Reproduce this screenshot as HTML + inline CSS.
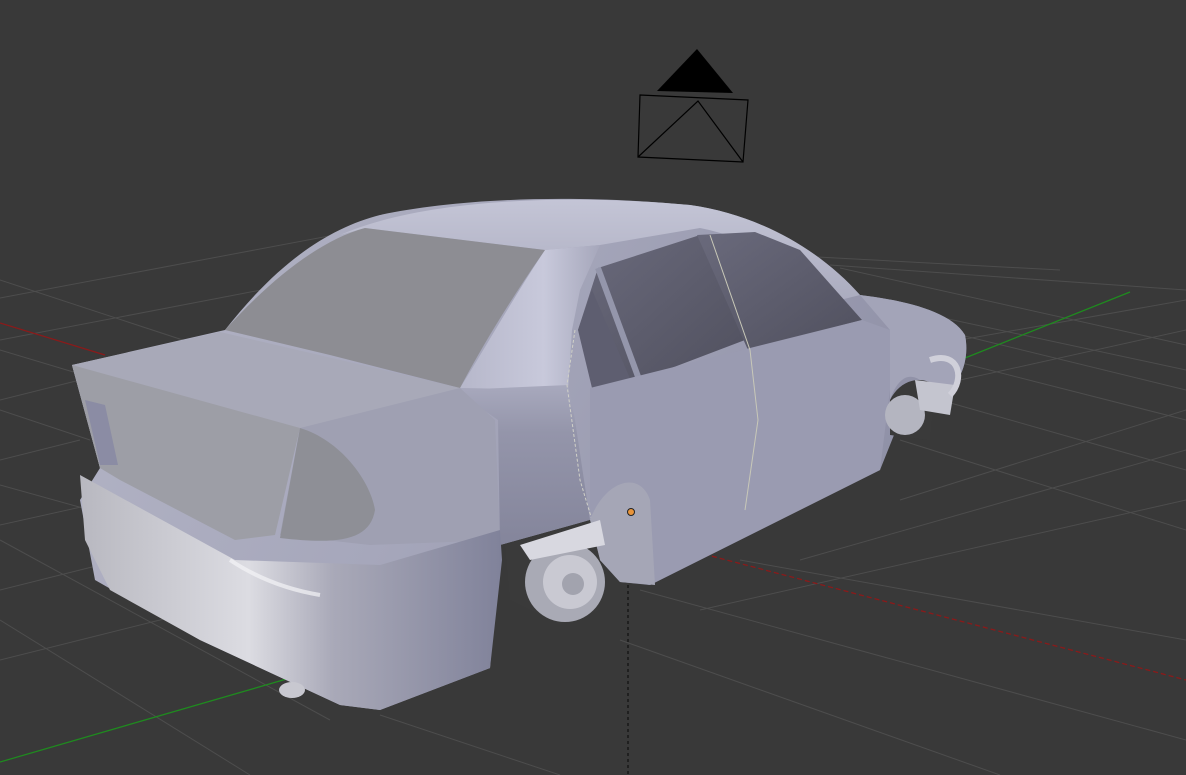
<!DOCTYPE html>
<html><head><meta charset="utf-8"><style>
html,body{margin:0;padding:0;background:#393939;overflow:hidden}
svg{display:block}
</style></head><body>
<svg width="1186" height="775" viewBox="0 0 1186 775" xmlns="http://www.w3.org/2000/svg">
<defs>
<linearGradient id="body" x1="0" y1="0" x2="1" y2="0.3">
<stop offset="0" stop-color="#b4b5c6"/><stop offset="0.5" stop-color="#a6a7bb"/><stop offset="1" stop-color="#8f90a6"/></linearGradient>
<linearGradient id="roof" x1="0" y1="0" x2="0" y2="1">
<stop offset="0" stop-color="#c4c5d6"/><stop offset="1" stop-color="#abacbf"/></linearGradient>
<linearGradient id="win" x1="0" y1="0" x2="1" y2="1">
<stop offset="0" stop-color="#6a6a7c"/><stop offset="1" stop-color="#50505e"/></linearGradient>
<linearGradient id="bump" x1="0" y1="0" x2="1" y2="0">
<stop offset="0" stop-color="#b8b8c0"/><stop offset="0.4" stop-color="#dcdce2"/><stop offset="0.6" stop-color="#a9a9b8"/><stop offset="1" stop-color="#80829a"/></linearGradient>
<linearGradient id="pillar" x1="0" y1="0" x2="1" y2="0">
<stop offset="0" stop-color="#b6b7ca"/><stop offset="0.6" stop-color="#c8c9db"/><stop offset="1" stop-color="#a6a7bb"/></linearGradient>
<linearGradient id="quarter" x1="0" y1="0" x2="0" y2="1">
<stop offset="0" stop-color="#a8a9bd"/><stop offset="0.3" stop-color="#9495aa"/><stop offset="1" stop-color="#84859b"/></linearGradient>
</defs>
<rect width="1186" height="775" fill="#393939"/>
<g stroke="#4d4d4d" stroke-width="1" fill="none">
<path d="M0 298 L520 200"/><path d="M0 340 L470 250"/><path d="M0 400 L80 380"/><path d="M0 460 L80 440"/><path d="M0 525 L90 505"/><path d="M0 590 L120 560"/><path d="M0 660 L200 610"/>
<path d="M0 280 L320 385"/><path d="M0 350 L100 380"/><path d="M0 410 L90 440"/><path d="M0 485 L90 510"/>
<path d="M0 540 L330 720"/><path d="M0 620 L250 775"/><path d="M380 715 L560 775"/>
<path d="M840 268 L1186 345"/><path d="M860 300 L1186 370"/><path d="M940 330 L1186 390"/><path d="M950 360 L1186 420"/><path d="M940 400 L1186 470"/><path d="M900 440 L1186 530"/>
<path d="M830 265 L1186 290"/><path d="M960 340 L1186 300"/><path d="M960 380 L1186 330"/><path d="M900 500 L1186 410"/><path d="M800 560 L1186 450"/><path d="M700 610 L1186 500"/>
<path d="M640 590 L1186 740"/><path d="M620 640 L1000 775"/><path d="M740 560 L1186 640"/>
<path d="M780 255 L1060 270"/>
</g>
<path d="M0 323 L105 355" stroke="#8a1a1a" stroke-width="1.3"/>
<path d="M650 540 L1186 680" stroke="#8a1a1a" stroke-width="1.3" stroke-dasharray="5 3"/>
<path d="M0 762 L290 678" stroke="#1f8a1f" stroke-width="1.3"/>
<path d="M960 360 L1130 292" stroke="#1f8a1f" stroke-width="1.3"/>
<path d="M628 585 L628 775" stroke="#111" stroke-width="1.2" stroke-dasharray="3 3"/>
<!-- camera -->
<polygon points="657,91 697,49 733,93" fill="#000"/>
<polygon points="640,95 748,100 743,162 638,157" fill="none" stroke="#000" stroke-width="1.2"/>
<polyline points="638,157 698,101 743,162" fill="none" stroke="#000" stroke-width="1.2"/>
<!-- main body silhouette -->
<path d="M225 330 C280 260 330 228 380 215 C450 200 560 193 690 205 C760 215 820 250 860 295 C900 300 950 310 965 335 C970 360 960 380 950 390 L900 420 L880 470 L650 585 L620 582 L600 560 L590 520 L500 545 L490 668 L380 710 L340 705 L200 640 L95 580 L80 500 L100 468 L72 365 Z" fill="url(#body)"/>
<!-- roof -->
<path d="M340 235 C420 200 560 193 690 205 C760 215 820 250 860 295 L840 300 C800 270 760 240 700 228 L600 245 L545 250 L365 228 Z" fill="url(#roof)"/>
<!-- C pillar -->
<path d="M545 250 L600 245 L580 290 L572 330 L568 390 L460 388 C490 340 515 295 545 250 Z" fill="url(#pillar)"/>
<!-- rear window -->
<path d="M225 330 C270 280 320 240 365 228 L545 250 C510 300 480 350 460 388 L330 355 Z" fill="#8d8d93"/>
<!-- quarter panel -->
<path d="M455 390 L568 385 L575 420 L590 520 L500 545 L498 420 Z" fill="url(#quarter)"/>
<!-- trunk top -->
<polygon points="72,365 220,332 460,388 300,428 100,468" fill="#a8a9b8"/>
<!-- rear face -->
<polygon points="72,365 300,428 275,535 235,540 120,480 100,468" fill="#9d9ea6"/>
<polygon points="300,428 460,388 495,420 500,540 370,545 280,535" fill="#9fa0b2"/>
<path d="M300,428 C340,440 370,480 375,510 C370,540 340,545 280,538 Z" fill="#8e8f96"/>
<polygon points="85,400 105,405 118,465 100,465" fill="#8b8ca4"/>
<!-- side windows -->
<polygon points="578,330 598,268 700,235 745,340 632,383" fill="url(#win)"/>
<polygon points="578,330 592,290 632,383 592,388" fill="#5e5e70"/>
<polygon points="697,235 755,232 800,250 862,320 748,350" fill="url(#win)"/>
<path d="M598 268 L640 382" stroke="#9496ab" stroke-width="6"/>
<!-- doors lower -->
<polygon points="590,388 862,320 890,330 890,390 880,470 650,585 620,580 600,560 590,520" fill="#9a9bb1"/>
<path d="M710 235 L750 350 L758 420 L745 510" stroke="#c8c8b8" stroke-width="1" fill="none"/>
<path d="M575 330 L567 385 L580 480 L592 520" stroke="#d0d0c8" stroke-width="1" fill="none" stroke-dasharray="3 2"/>
<!-- front fender -->
<path d="M860 295 C900 300 950 310 965 335 C970 360 960 380 950 390 L920 380 C905 370 895 385 890 400 L890 330 Z" fill="#a3a4b8"/>
<!-- bumper -->
<path d="M80 475 L235 560 L380 565 L500 530 L502 560 L490 668 L380 710 L340 705 L200 640 L110 590 L85 540 Z" fill="url(#bump)"/>
<path d="M230 560 C260 580 290 590 320 595" stroke="#f4f4f6" stroke-width="4" fill="none" opacity="0.7"/>
<!-- front wheel arch -->
<path d="M590 520 C605 480 640 470 650 500 L655 585 L620 582 L600 560 Z" fill="#a5a6b6"/>
<!-- wheels -->
<path d="M505 545 L590 520 L600 560 L600 610 L560 625 L510 600 Z" fill="#3a3a3a"/>
<circle cx="565" cy="582" r="40" fill="#a9aab5"/>
<circle cx="570" cy="582" r="27" fill="#c9c9d2"/>
<circle cx="573" cy="584" r="11" fill="#a2a3ae"/>
<polygon points="520,545 600,520 605,545 530,560" fill="#d8d8e0"/>
<path d="M890 400 C900 380 920 375 935 385 L930 440 L890 435 Z" fill="#3a3a3a"/>
<circle cx="905" cy="415" r="20" fill="#b4b5c0"/>
<polygon points="915,380 955,385 950,415 920,410" fill="#c4c5cf"/>
<path d="M930 360 C960 350 965 380 950 395" stroke="#d0d0da" stroke-width="6" fill="none"/>
<!-- exhaust -->
<ellipse cx="292" cy="690" rx="13" ry="8" fill="#c8c8d0"/>
<circle cx="631" cy="512" r="3.5" fill="#e8943a" stroke="#222" stroke-width="1"/>
</svg>
</body></html>
